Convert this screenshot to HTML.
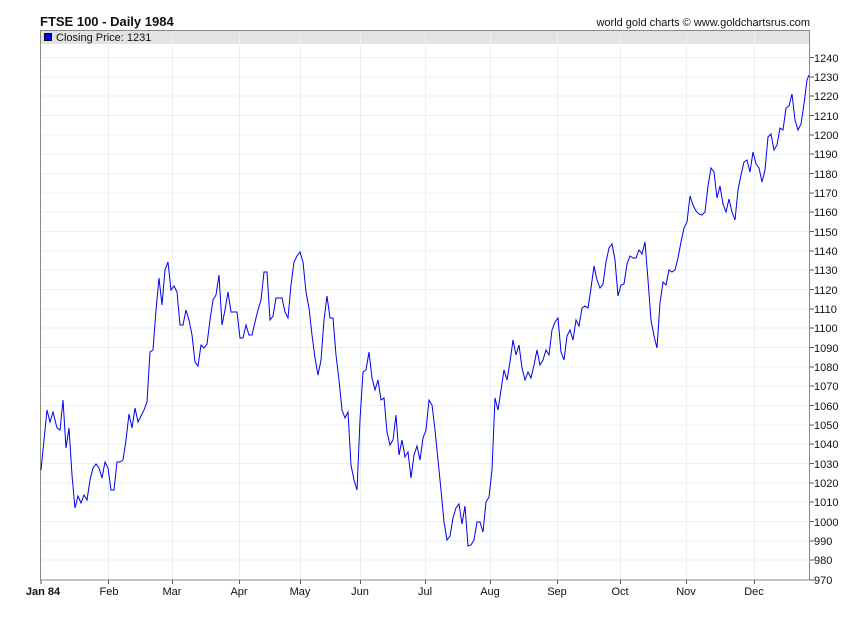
<!DOCTYPE html>
<html><head><meta charset="utf-8"><style>
body{margin:0;background:#fff;width:850px;height:616px;overflow:hidden;font-family:"Liberation Sans",Arial,sans-serif}
</style></head><body>
<svg width="850" height="616" xmlns="http://www.w3.org/2000/svg" font-family="Liberation Sans, Arial, sans-serif">
<text x="40" y="26" font-size="13" font-weight="bold" fill="#111">FTSE 100 - Daily 1984</text>
<text x="810" y="26" font-size="11" fill="#111" text-anchor="end">world gold charts © www.goldchartsrus.com</text>
<rect x="40" y="30" width="770" height="14" fill="#e3e3e3"/>
<g stroke="#e6f0f8" stroke-width="1">
<line x1="40" x2="810" y1="57.5" y2="57.5"/><line x1="40" x2="810" y1="77" y2="77"/><line x1="40" x2="810" y1="96" y2="96"/><line x1="40" x2="810" y1="115.5" y2="115.5"/><line x1="40" x2="810" y1="135" y2="135"/><line x1="40" x2="810" y1="154" y2="154"/><line x1="40" x2="810" y1="173.5" y2="173.5"/><line x1="40" x2="810" y1="193" y2="193"/><line x1="40" x2="810" y1="212" y2="212"/><line x1="40" x2="810" y1="231.5" y2="231.5"/><line x1="40" x2="810" y1="251" y2="251"/><line x1="40" x2="810" y1="270" y2="270"/><line x1="40" x2="810" y1="289.5" y2="289.5"/><line x1="40" x2="810" y1="309" y2="309"/><line x1="40" x2="810" y1="328" y2="328"/><line x1="40" x2="810" y1="347.5" y2="347.5"/><line x1="40" x2="810" y1="367" y2="367"/><line x1="40" x2="810" y1="386" y2="386"/><line x1="40" x2="810" y1="405.5" y2="405.5"/><line x1="40" x2="810" y1="425" y2="425"/><line x1="40" x2="810" y1="444" y2="444"/><line x1="40" x2="810" y1="463.5" y2="463.5"/><line x1="40" x2="810" y1="483" y2="483"/><line x1="40" x2="810" y1="502" y2="502"/><line x1="40" x2="810" y1="521.5" y2="521.5"/><line x1="40" x2="810" y1="541" y2="541"/><line x1="40" x2="810" y1="560" y2="560"/>
<line y1="30" y2="580" x1="108.5" x2="108.5"/><line y1="30" y2="580" x1="172.5" x2="172.5"/><line y1="30" y2="580" x1="239.5" x2="239.5"/><line y1="30" y2="580" x1="300.5" x2="300.5"/><line y1="30" y2="580" x1="360.5" x2="360.5"/><line y1="30" y2="580" x1="425.5" x2="425.5"/><line y1="30" y2="580" x1="490.5" x2="490.5"/><line y1="30" y2="580" x1="557.5" x2="557.5"/><line y1="30" y2="580" x1="620.5" x2="620.5"/><line y1="30" y2="580" x1="686.5" x2="686.5"/><line y1="30" y2="580" x1="754.5" x2="754.5"/>
</g>
<rect x="40.5" y="30.5" width="769" height="549.5" fill="none" stroke="#888"/>
<rect x="44.5" y="33.5" width="7" height="7" fill="#0000ff" stroke="#000"/>
<text x="56" y="41" font-size="11" fill="#111">Closing Price: 1231</text>
<polyline fill="none" stroke="#0000ee" stroke-width="1" points="41,470 47,410 50,422 53,412 57,428 60,430 63,400 66,448 69,428 72,475 75,508 78,496 81,503 84,495 87,500 90,480 93,468 96,464 99,468 102,478 105,462 108,468 111,490 114,490 117,462 120,462 123,460 126,440 129,414 132,428 135,408 138,422 141,416 144,410 147,402 150,352 153,350 156,310 159,278 162,305 165,270 168,262 171,290 174,286 177,292 180,325 183,325 186,310 189,320 192,335 195,362 198,366 201,345 204,348 207,344 210,320 213,300 216,295 219,275 222,325 225,310 228,292 231,312 234,312 237,312 240,338 243,338 246,325 249,335 252,335 255,322 258,310 261,300 264,272 267,272 270,320 273,316 276,298 279,298 282,298 285,312 288,318 291,285 294,262 297,256 300,252 303,262 306,292 309,308 312,335 315,358 318,375 321,360 324,320 327,296 330,318 333,318 336,355 339,380 342,410 345,418 348,412 351,465 354,480 357,490 360,420 363,372 366,370 369,352 372,378 375,390 378,380 381,400 384,398 387,432 390,445 393,440 396,415 399,455 402,440 405,457 408,452 411,478 414,455 417,446 420,460 423,438 426,430 429,400 432,405 435,430 438,460 441,490 444,522 447,540 450,536 453,518 456,508 459,504 462,524 465,506 468,546 471,545 474,540 477,522 480,522 483,532 486,502 489,497 492,470 495,398 498,410 501,390 504,370 507,380 510,362 513,340 516,355 519,345 522,368 525,380 528,372 531,378 534,365 537,350 540,365 543,360 546,350 549,355 552,330 555,322 558,318 561,352 564,360 567,336 570,330 573,340 576,320 579,326 582,308 585,306 588,308 591,288 594,266 597,280 600,288 603,284 606,262 609,248 612,244 615,260 618,296 621,285 624,284 627,264 630,256 633,258 636,258 639,250 642,254 645,242 648,280 651,320 654,336 657,348 660,303 663,282 666,285 669,270 672,272 675,270 678,258 681,242 684,228 687,222 690,196 693,205 696,211 699,214 702,215 705,212 708,186 711,168 714,172 717,198 720,186 723,204 726,212 729,199 732,212 735,220 738,190 741,175 744,162 747,160 750,172 753,152 756,164 759,168 762,182 765,170 768,137 771,134 774,150 777,145 780,128 783,130 786,108 789,106 792,94 795,120 798,130 801,124 804,104 807,80 809,75"/>
<g stroke="#555"><line x1="810" x2="814" y1="57.5" y2="57.5"/><line x1="810" x2="814" y1="77" y2="77"/><line x1="810" x2="814" y1="96" y2="96"/><line x1="810" x2="814" y1="115.5" y2="115.5"/><line x1="810" x2="814" y1="135" y2="135"/><line x1="810" x2="814" y1="154" y2="154"/><line x1="810" x2="814" y1="173.5" y2="173.5"/><line x1="810" x2="814" y1="193" y2="193"/><line x1="810" x2="814" y1="212" y2="212"/><line x1="810" x2="814" y1="231.5" y2="231.5"/><line x1="810" x2="814" y1="251" y2="251"/><line x1="810" x2="814" y1="270" y2="270"/><line x1="810" x2="814" y1="289.5" y2="289.5"/><line x1="810" x2="814" y1="309" y2="309"/><line x1="810" x2="814" y1="328" y2="328"/><line x1="810" x2="814" y1="347.5" y2="347.5"/><line x1="810" x2="814" y1="367" y2="367"/><line x1="810" x2="814" y1="386" y2="386"/><line x1="810" x2="814" y1="405.5" y2="405.5"/><line x1="810" x2="814" y1="425" y2="425"/><line x1="810" x2="814" y1="444" y2="444"/><line x1="810" x2="814" y1="463.5" y2="463.5"/><line x1="810" x2="814" y1="483" y2="483"/><line x1="810" x2="814" y1="502" y2="502"/><line x1="810" x2="814" y1="521.5" y2="521.5"/><line x1="810" x2="814" y1="541" y2="541"/><line x1="810" x2="814" y1="560" y2="560"/><line x1="810" x2="814" y1="580" y2="580"/>
<line x1="41" x2="41" y1="580" y2="584"/><line x1="108.5" x2="108.5" y1="580" y2="584"/><line x1="172.5" x2="172.5" y1="580" y2="584"/><line x1="239.5" x2="239.5" y1="580" y2="584"/><line x1="300.5" x2="300.5" y1="580" y2="584"/><line x1="360.5" x2="360.5" y1="580" y2="584"/><line x1="425.5" x2="425.5" y1="580" y2="584"/><line x1="490.5" x2="490.5" y1="580" y2="584"/><line x1="557.5" x2="557.5" y1="580" y2="584"/><line x1="620.5" x2="620.5" y1="580" y2="584"/><line x1="686.5" x2="686.5" y1="580" y2="584"/><line x1="754.5" x2="754.5" y1="580" y2="584"/></g>
<g font-size="11" fill="#111">
<text x="814" y="62">1240</text><text x="814" y="81">1230</text><text x="814" y="100">1220</text><text x="814" y="120">1210</text><text x="814" y="139">1200</text><text x="814" y="158">1190</text><text x="814" y="178">1180</text><text x="814" y="197">1170</text><text x="814" y="216">1160</text><text x="814" y="236">1150</text><text x="814" y="255">1140</text><text x="814" y="274">1130</text><text x="814" y="294">1120</text><text x="814" y="313">1110</text><text x="814" y="332">1100</text><text x="814" y="352">1090</text><text x="814" y="371">1080</text><text x="814" y="390">1070</text><text x="814" y="410">1060</text><text x="814" y="429">1050</text><text x="814" y="448">1040</text><text x="814" y="468">1030</text><text x="814" y="487">1020</text><text x="814" y="506">1010</text><text x="814" y="526">1000</text><text x="814" y="545">990</text><text x="814" y="564">980</text><text x="814" y="584">970</text>
</g>
<g font-size="11" fill="#111" text-anchor="middle">
<text x="43" y="595" font-weight="bold">Jan 84</text><text x="109" y="595">Feb</text><text x="172" y="595">Mar</text><text x="239" y="595">Apr</text><text x="300" y="595">May</text><text x="360" y="595">Jun</text><text x="425" y="595">Jul</text><text x="490" y="595">Aug</text><text x="557" y="595">Sep</text><text x="620" y="595">Oct</text><text x="686" y="595">Nov</text><text x="754" y="595">Dec</text>
</g>
</svg>
</body></html>
